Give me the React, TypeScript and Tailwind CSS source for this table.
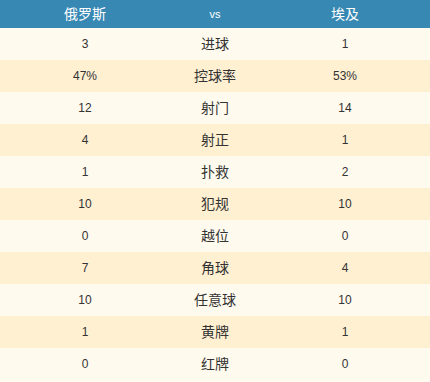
const rows: [string, string, string][] = [
  ["3", "进球", "1"],
  ["47%", "控球率", "53%"],
  ["12", "射门", "14"],
  ["4", "射正", "1"],
  ["1", "扑救", "2"],
  ["10", "犯规", "10"],
  ["0", "越位", "0"],
  ["7", "角球", "4"],
  ["10", "任意球", "10"],
  ["1", "黄牌", "1"],
  ["0", "红牌", "0"],
];

export default function App() {
  return (
    <div
      className="w-[430px] min-h-[382px] bg-[#fffaee] text-[#333]"
      style={{ fontFamily: '"Liberation Sans", "Noto Sans CJK SC", sans-serif' }}
    >
      <div className="grid grid-cols-[170px_90px_170px] h-[28px] items-center bg-[#3788b3] text-white">
        <div className="text-center text-[14px]">俄罗斯</div>
        <div className="text-center text-[11px]">vs</div>
        <div className="text-center text-[14px]">埃及</div>
      </div>
      {rows.map(([a, label, b], i) => (
        <div
          key={label}
          className={
            "grid grid-cols-[170px_90px_170px] h-[32px] items-center " +
            (i % 2 === 1 ? "bg-[#fff0d2]" : "bg-[#fffaee]")
          }
        >
          <div className="text-center text-[12px]">{a}</div>
          <div className="text-center text-[14px]">{label}</div>
          <div className="text-center text-[12px]">{b}</div>
        </div>
      ))}
    </div>
  );
}
